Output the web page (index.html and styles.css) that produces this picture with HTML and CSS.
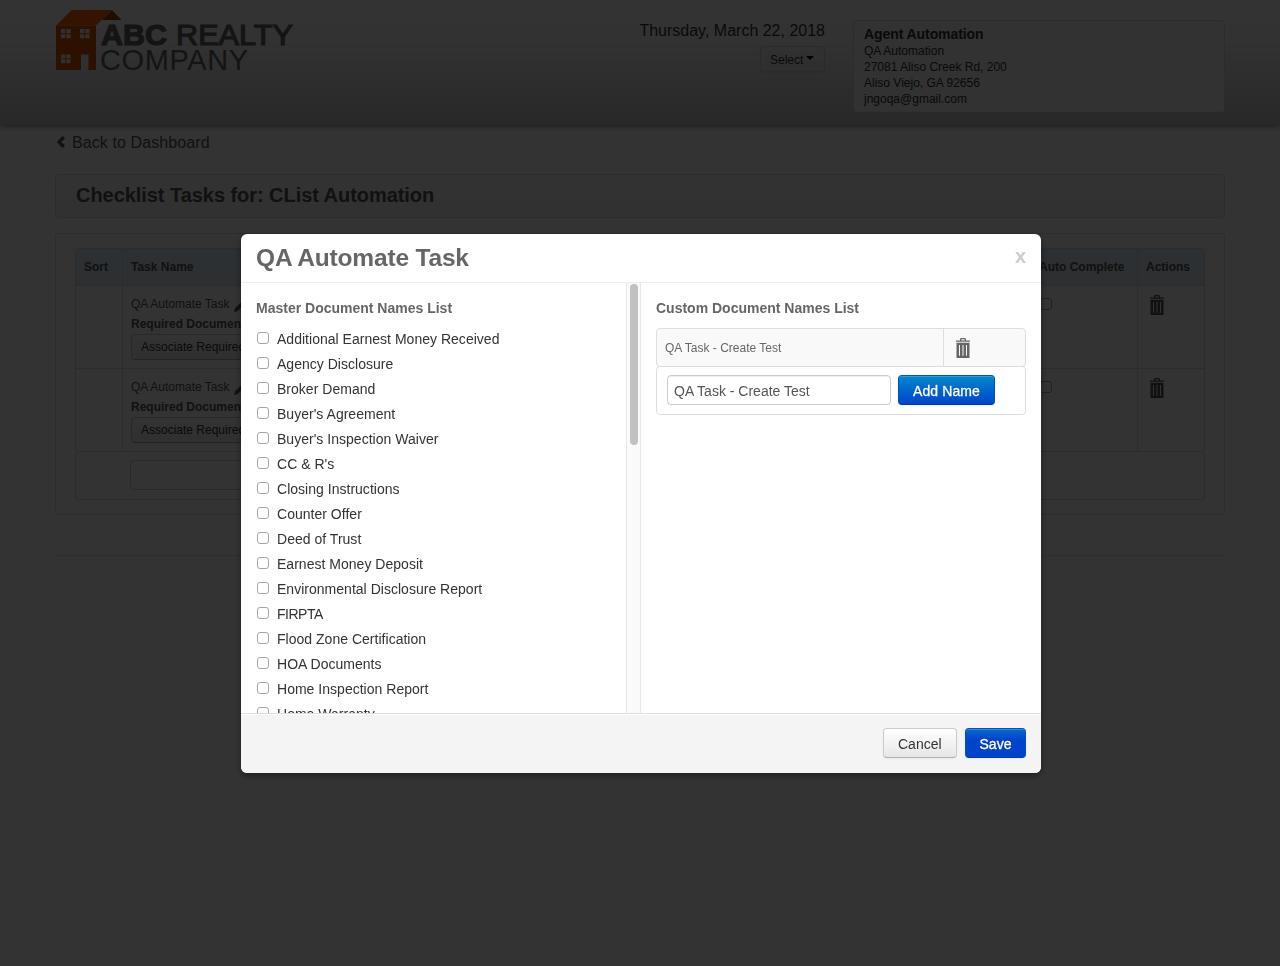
FILE: index.html
```html
<!DOCTYPE html>
<html lang="en">
<head>
<meta charset="utf-8">
<title>Checklist Tasks</title>
<link rel="stylesheet" href="styles.css">
</head>
<body>
<svg width="0" height="0" class="defs">
  <symbol id="trash" viewBox="0 0 14 20">
    <path d="M4 2.600V1.400Q4 0 5.400 0h3.200Q10 0 10 1.400v1.200h4v1.200H0V2.600zM5.400 2.600h3.200V1.300H5.400z" fill="currentColor" fill-rule="evenodd"/>
    <path d="M.500 4.800h13V20H.500zM3 7v10.700h1V7zM6.500 7v10.700h1V7zM10 7v10.700h1V7z" fill="currentColor" fill-rule="evenodd"/>
  </symbol>
  <symbol id="pencil" viewBox="0 0 12 12">
    <path d="M0 12l1-4 6.500-6.500 3 3L4 11z M8.300.800L9.100 0l3 3-.8.800z" fill="currentColor"/>
  </symbol>
</svg>
<div class="page">
  <header class="top">
    <div class="wrap top-row">
      <svg class="logo" width="240" height="62" viewBox="55 9 240 62">
        <path d="M56 25.500L71.500 10H112L96 25.500z" fill="#ff6600"/>
        <path d="M112 10l9.500 10H102z" fill="#a34200"/>
        <path d="M56 25.500h40V70h-7.500V54.500H81V70H56z" fill="#e05500"/>
        <path d="M61 29h4.300v4.200H61zM66.300 29h4.300v4.200h-4.300zM61 34.200h4.300v4H61zM66.300 34.200h4.300v4h-4.300zM80 29h4.300v4.200H80zM85.300 29h4.300v4.200h-4.300zM80 34.200h4.300v4H80zM85.300 34.200h4.300v4h-4.300zM61 54.500h4.300v4H61zM66.300 54.500h4.300v4h-4.300zM61 59.300h4.300v4H61zM66.300 59.300h4.300v4h-4.300z" fill="#eee"/>
        <text class="logo-abc" x="101" y="44.800" textLength="66" lengthAdjust="spacingAndGlyphs">ABC</text>
        <text class="logo-realty" x="176" y="44.800" textLength="117" lengthAdjust="spacingAndGlyphs">REALTY</text>
        <text class="logo-company" x="100" y="69.500" textLength="148">COMPANY</text>
      </svg>
      <div class="date-col">
        <div class="date">Thursday, March 22, 2018</div>
        <div class="btn small select">Select<i class="caret"></i></div>
      </div>
      <div class="agent">
        <strong>Agent Automation</strong>
        <span>QA Automation</span>
        <span>27081 Aliso Creek Rd, 200</span>
        <span>Aliso Viejo, GA 92656</span>
        <span>jngoqa@gmail.com</span>
      </div>
    </div>
  </header>
  <main class="wrap">
    <div class="back"><svg width="9" height="12" viewBox="0 0 9 12"><path d="M6 0l2.500 2.300L4.700 6l3.800 3.700L6 12 .3 6z" fill="currentColor"/></svg>Back to Dashboard</div>
    <h1 class="title">Checklist Tasks for: CList Automation</h1>
    <section class="card">
      <div class="tasks">
        <div class="row head"><div>Sort</div><div>Task Name</div><div>Auto Complete</div><div>Actions</div></div>
        <div class="row">
          <div></div>
          <div class="task"><p>QA Automate Task <svg width="11" height="11"><use href="#pencil"/></svg></p><b>Required Documents</b><span class="btn small">Associate Required Documents</span></div>
          <div><i class="check"></i></div>
          <div><svg class="trash" width="14" height="20"><use href="#trash"/></svg></div>
        </div>
        <div class="row">
          <div></div>
          <div class="task"><p>QA Automate Task <svg width="11" height="11"><use href="#pencil"/></svg></p><b>Required Documents</b><span class="btn small">Associate Required Documents</span></div>
          <div><i class="check"></i></div>
          <div><svg class="trash" width="14" height="20"><use href="#trash"/></svg></div>
        </div>
      </div>
      <div class="add-task"><div class="field"></div></div>
    </section>
    <hr class="rule">
  </main>
</div>
<div class="backdrop">
  <div class="modal">
    <div class="modal-head"><h2>QA Automate Task</h2><span class="close">x</span></div>
    <div class="modal-body">
      <div class="master">
        <div class="list">
          <h3>Master Document Names List</h3>
          <label><i class="check"></i>Additional Earnest Money Received</label>
          <label><i class="check"></i>Agency Disclosure</label>
          <label><i class="check"></i>Broker Demand</label>
          <label><i class="check"></i>Buyer's Agreement</label>
          <label><i class="check"></i>Buyer's Inspection Waiver</label>
          <label><i class="check"></i>CC &amp; R's</label>
          <label><i class="check"></i>Closing Instructions</label>
          <label><i class="check"></i>Counter Offer</label>
          <label><i class="check"></i>Deed of Trust</label>
          <label><i class="check"></i>Earnest Money Deposit</label>
          <label><i class="check"></i>Environmental Disclosure Report</label>
          <label class="tight"><i class="check"></i>FIRPTA</label>
          <label><i class="check"></i>Flood Zone Certification</label>
          <label><i class="check"></i>HOA Documents</label>
          <label><i class="check"></i>Home Inspection Report</label>
          <label><i class="check"></i>Home Warranty</label>
        </div>
        <div class="track"><div class="thumb"></div></div>
      </div>
      <div class="custom">
        <h3>Custom Document Names List</h3>
        <div class="name-row"><span>QA Task - Create Test</span><div><svg width="14" height="20"><use href="#trash"/></svg></div></div>
        <div class="name-add"><div class="input">QA Task - Create Test</div><div class="btn primary add">Add Name</div></div>
      </div>
    </div>
    <div class="modal-foot"><div class="btn cancel">Cancel</div><div class="btn primary save">Save</div></div>
  </div>
</div>
</body>
</html>
```
FILE: styles.css
```css
* { box-sizing: border-box; }
html, body { height: 100%; }
body {
  margin: 0;
  overflow: hidden;
  background: #fff;
  color: #333;
  font: 14px/20px "Liberation Sans", Arial, sans-serif;
}
h1, h2, h3, p { margin: 0; }
.defs { position: absolute; }
.wrap { width: 1170px; margin: 0 auto; }

.top {
  height: 125px;
  background: linear-gradient(#fff, #fafafa 30%, #c8c8c8);
  box-shadow: 0 1px 6px rgba(0, 0, 0, .5);
}
.top-row { display: flex; align-items: flex-start; padding-top: 9px; }
.logo { flex: none; }
.logo text { fill: #666; font-size: 29px; }
.logo .logo-abc { font-weight: bold; stroke: #666; stroke-width: 1.2px; }
.logo .logo-realty { stroke: #666; stroke-width: 1.2px; }
.date-col {
  display: flex;
  flex-direction: column;
  align-items: flex-end;
  width: 530px;
  padding-top: 12px;
  color: #333;
}
.date { font-size: 16px; line-height: 20px; }
.btn {
  display: flex;
  align-items: center;
  height: 30px;
  padding: 2px 14px 0;
  border: 1px solid #ccc;
  border-bottom-color: #b3b3b3;
  border-radius: 4px;
  background: linear-gradient(#fff, #e6e6e6);
  color: #333;
  white-space: nowrap;
  box-shadow: inset 0 1px 0 rgba(255, 255, 255, .2), 0 1px 2px rgba(0, 0, 0, .05);
}
.btn.small { height: 26px; padding: 0 9px; font-size: 12px; background: linear-gradient(#fff, #ececec); }
.btn.select { width: 65px; margin-top: 5px; padding-top: 1px; background: none; border-color: #cfcfcf; }
.caret { margin: -4px 0 0 3px; border: 4px solid transparent; border-top-color: #000; border-bottom: 0; }
.agent {
  display: flex;
  flex-direction: column;
  width: 372px;
  height: 92px;
  margin: 11px 0 0 28px;
  padding: 5px 10px;
  border: 1px solid #dcdcdc;
  border-bottom-color: #eee;
  border-radius: 4px;
  background: #f7f7f7;
  color: #333;
  font-size: 12px;
  line-height: 16px;
}
.agent strong { font-size: 14px; line-height: 17px; letter-spacing: -.08px; }

.back { display: flex; align-items: center; gap: 6px; height: 20px; margin-top: 8px; padding-left: 2px; font-size: 16px; letter-spacing: .1px; color: #555; }
.back svg { margin: -3px 0 0 -1px; width: 10px; }
.title {
  height: 44px;
  margin-top: 21px;
  padding: 0 20px;
  border: 1px solid #ddd;
  border-radius: 4px;
  background: linear-gradient(#fcfcfc, #f2f2f2);
  color: #555;
  font-size: 20px;
  line-height: 40px;
  letter-spacing: -.05px;
}
.card { height: 282px; margin-top: 15px; padding: 14px 19px; border: 1px solid #dedede; border-radius: 4px; }
.tasks { border: 1px solid #dadada; border-radius: 4px; font-size: 12px; color: #555; }
.row { display: grid; grid-template-columns: 46px 909px 106px 67px; height: 83px; border-top: 1px solid #dadada; }
.row > div { padding: 8px; border-left: 1px solid #dadada; }
.row > div:first-child { border-left: 0; }
.row.head { height: 36px; border-top: 0; background: #d9edf7; font-weight: bold; line-height: 20px; border-radius: 3px 3px 0 0; }
.row.head > div:nth-child(3) { padding-left: 7px; }
.task p { line-height: 20px; }
.task p svg { margin-left: 1px; vertical-align: -4px; }
.task b { display: block; line-height: 20px; }
.task .btn { width: 200px; }
.tasks .check { display: block; margin-top: 4px; }
.trash { display: block; margin: 1px 0 0 4px; color: #555; }
.add-task { height: 49px; margin-top: -1px; padding: 8px 54px; border: 1px solid #dadada; border-radius: 4px; }
.field { width: 300px; height: 30px; border: 1px solid #ccc; border-radius: 4px; }
.rule { height: 1px; margin: 40px 0 0; border: 0; background: #e3e3e3; }

.backdrop {
  position: fixed;
  inset: 0;
  padding: 234px 0 0 241px;
  background: rgba(0, 0, 0, .8);
}
.modal {
  width: 800px;
  height: 539px;
  overflow: hidden;
  border-radius: 6px;
  background: #fff;
  box-shadow: 0 3px 7px rgba(0, 0, 0, .4);
}
.modal-head { display: flex; justify-content: space-between; height: 49px; padding: 0 15px; border-bottom: 1px solid #eee; }
.modal-head h2 { color: #666; font-size: 24.5px; line-height: 47px; letter-spacing: -.17px; }
.close { color: #ccc; font-size: 20px; font-weight: bold; line-height: 44px; }
.modal-body { display: flex; height: 430px; }
h3 { color: #666; font-size: 14px; line-height: 20px; }
.master { display: flex; width: 400px; border-right: 1px solid #e8e8e8; overflow: hidden; }
.list { width: 385px; padding: 15px 15px 0; }
.list h3 { margin-bottom: 8px; }
.list label { display: flex; align-items: center; height: 25px; gap: 8px; padding: 1px 0 0 1px; white-space: nowrap; letter-spacing: .02px; }
.list .tight { letter-spacing: -.5px; }
.check { flex: none; width: 12px; height: 12px; border: 1px solid #a6a6a6; border-radius: 3px; background: #fff; }
.list .check { margin-top: -3px; }
.track { width: 14px; padding: 1px 0 0 3px; border-left: 1px solid #e8e8e8; background: #fafafa; }
.thumb { width: 8px; height: 161px; border-radius: 4px; background: #c1c1c1; }
.custom { flex: 1; padding: 15px; }
.name-row { display: flex; width: 370px; height: 39px; margin-top: 10px; border: 1px solid #ddd; border-radius: 4px; background: #f9f9f9; font-size: 12px; color: #666; }
.name-row span { width: 286px; padding-left: 8px; line-height: 38px; }
.name-row div { padding: 9px 0 0 12px; border-left: 1px solid #ddd; color: #666; }
.name-add { display: flex; gap: 7px; width: 370px; height: 49px; margin-top: -1px; padding: 8px 10px; border: 1px solid #ddd; border-radius: 4px; }
.input { width: 224px; height: 30px; padding: 1px 6px 0; border: 1px solid #ccc; border-radius: 4px; color: #555; line-height: 29px; box-shadow: inset 0 1px 1px rgba(0, 0, 0, .075); }
.btn.primary { border-color: #0055b5 #0050c0 #003aa8; background: linear-gradient(#08c, #04c); color: #fff; text-shadow: 0 -1px 0 rgba(0, 0, 0, .25); -webkit-text-stroke: .3px #fff; }
.btn.add { width: 97px; letter-spacing: .1px; }
.btn.cancel { width: 74px; }
.btn.save { width: 61px; padding: 2px 0 0; justify-content: center; background: linear-gradient(#0a68d0, #04c 40%); }
.modal-foot { display: flex; justify-content: flex-end; gap: 8px; height: 60px; padding: 14px 15px; border-top: 1px solid #ddd; background: #f4f4f4; box-shadow: inset 0 1px 0 #fff; }
```
